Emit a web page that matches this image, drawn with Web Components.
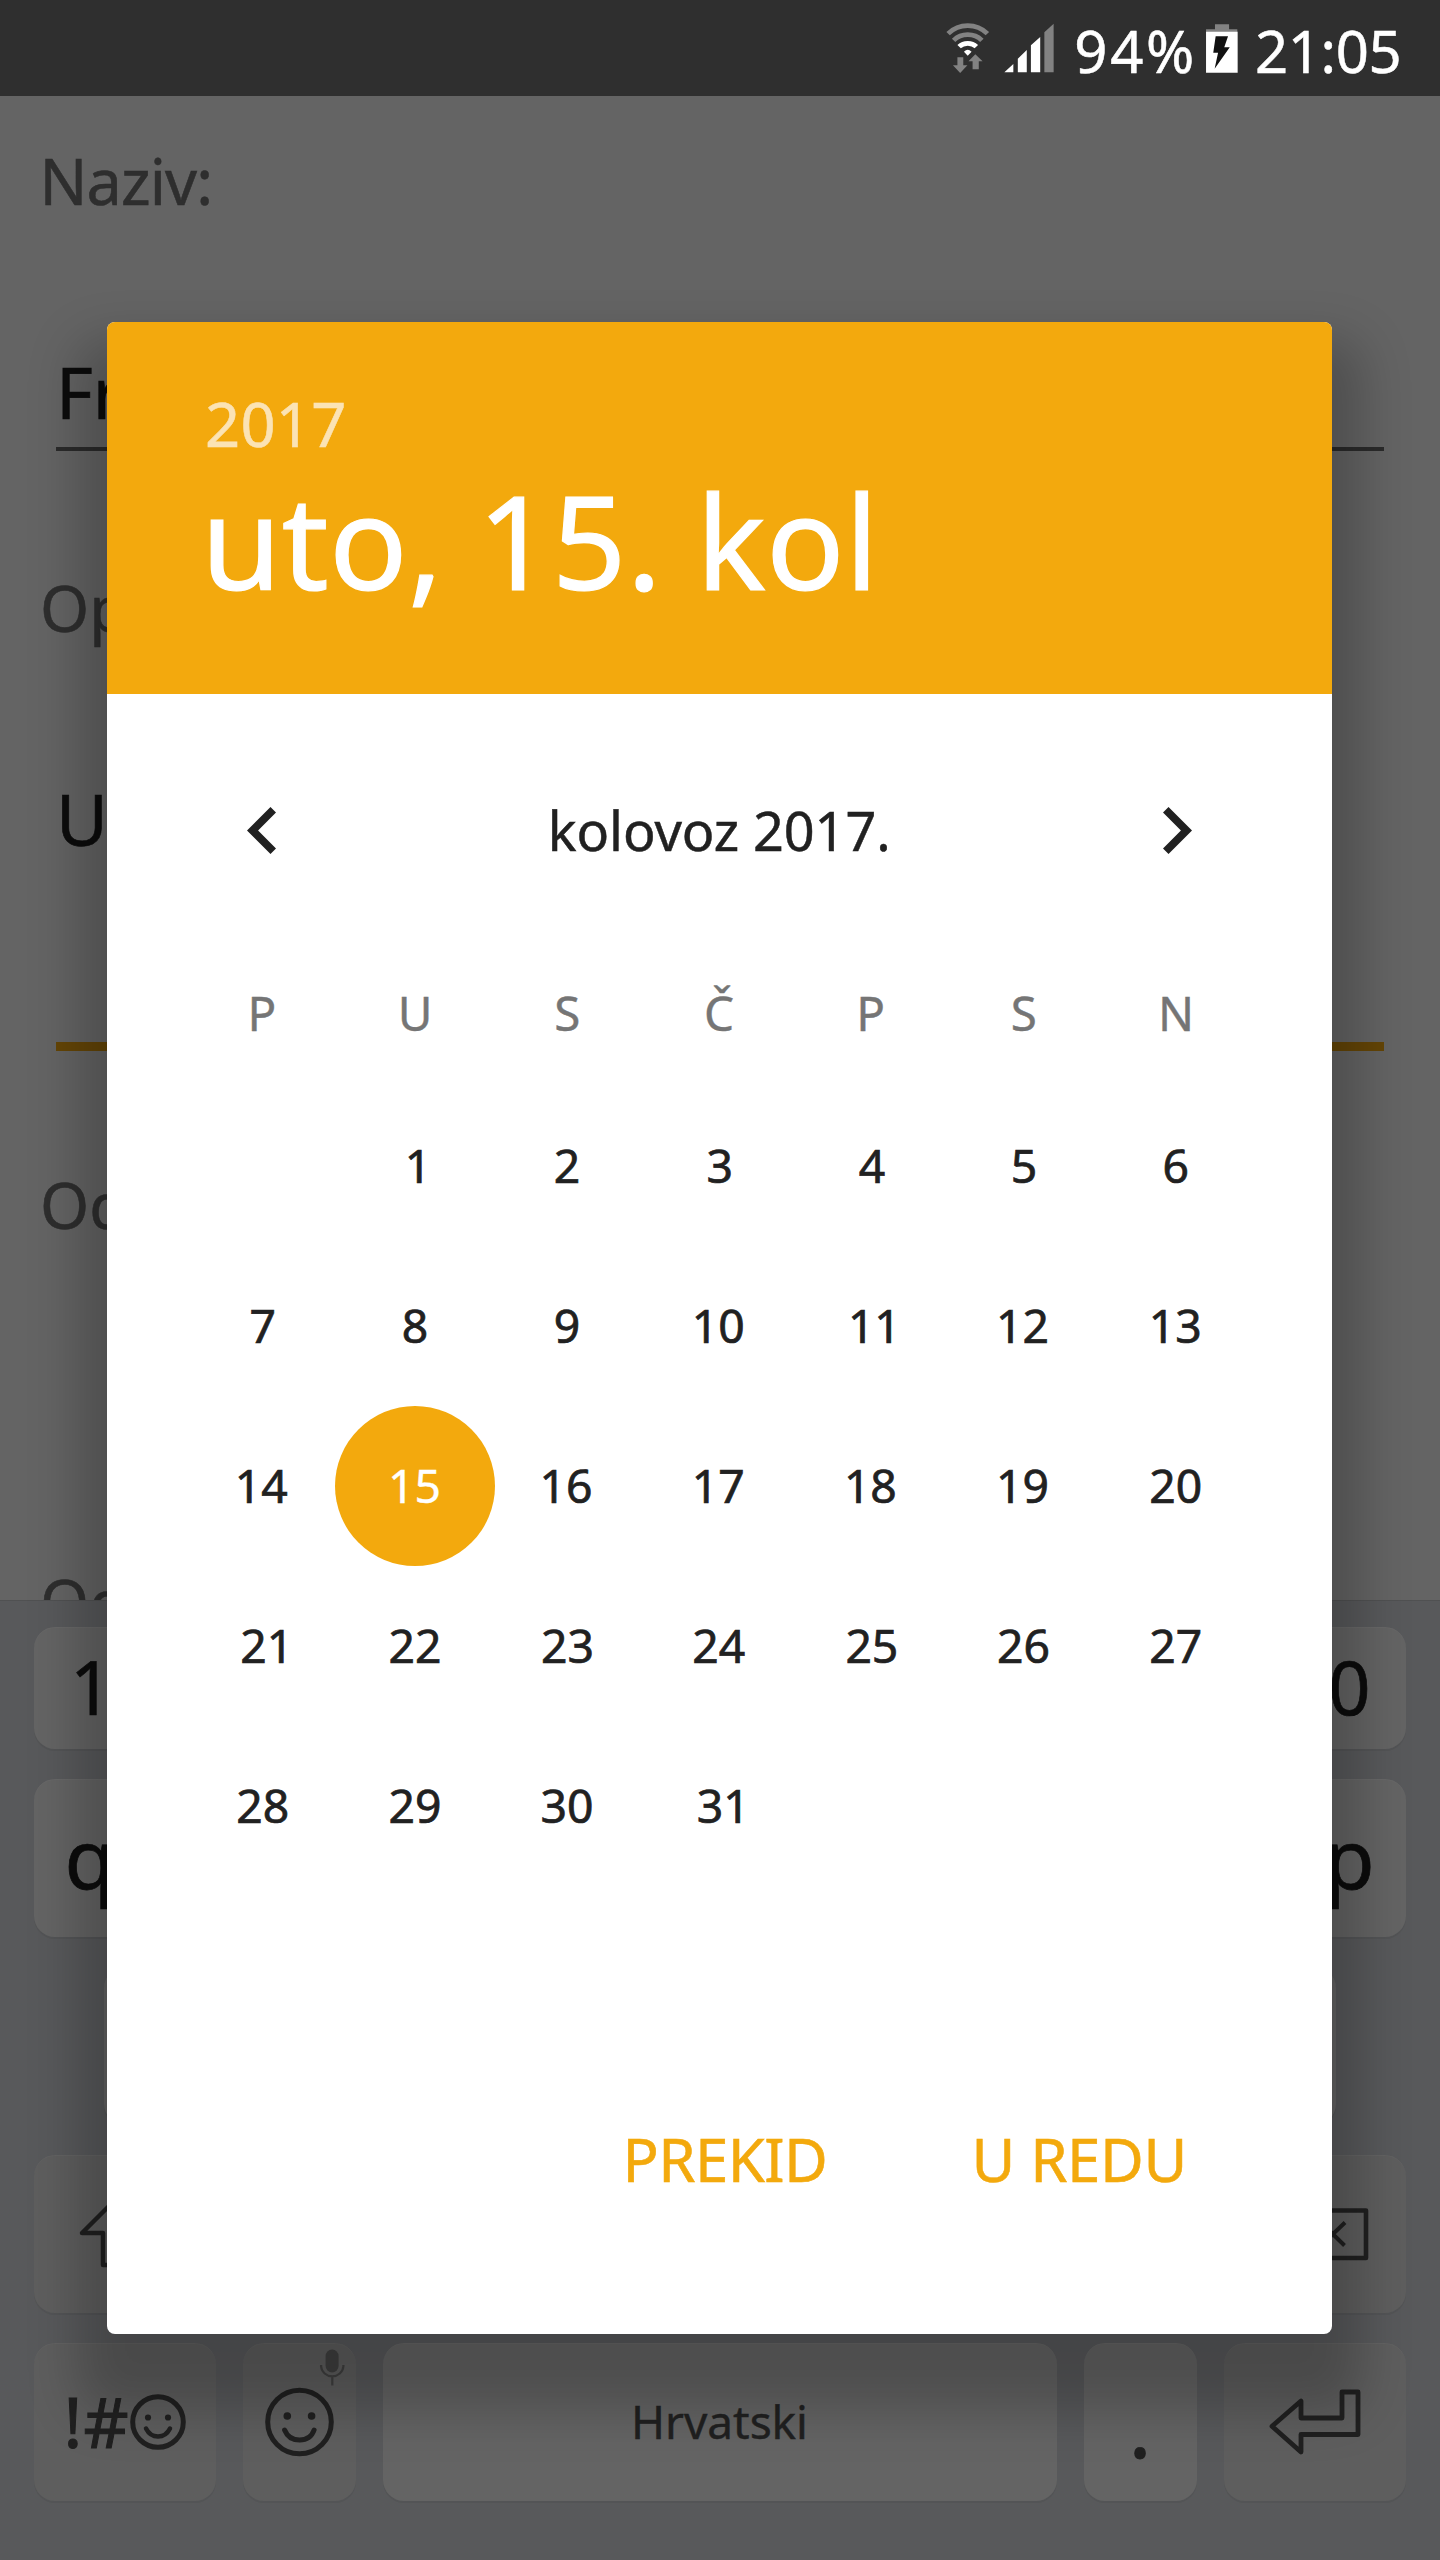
<!DOCTYPE html>
<html lang="hr">
<head>
<meta charset="utf-8">
<title>Odabir datuma</title>
<style>
html,body{margin:0;padding:0}
body{width:1440px;height:2560px;overflow:hidden;background:#646464;font-family:"Noto Sans","Open Sans",sans-serif}
</style>
</head>
<body>
<phone-screen></phone-screen>
<script>
/* Text whose box is its cap height; w sets the ink width through letter spacing. */
class InkText extends HTMLElement{
  connectedCallback(){
    const s=+this.getAttribute('size'),w=+this.getAttribute('w')||0,wt=this.getAttribute('weight')||400,t=this.textContent;
    const c=document.createElement('canvas').getContext('2d');
    c.font=`${wt} ${s}px "Noto Sans","Open Sans",sans-serif`;
    const m=c.measureText(t),ink=m.actualBoundingBoxLeft+m.actualBoundingBoxRight;
    const ls=w&&t.length>1?(w-ink)/(t.length-1):0,out=w||ink;
    const r=this.attachShadow({mode:'open'});
    r.innerHTML=`<style>:host{display:block;flex:none;width:${out}px;height:${.714*s}px;white-space:nowrap;font-size:${s}px;font-weight:${wt};line-height:${.714*s}px}
    span{display:block;width:max-content;margin-left:${m.actualBoundingBoxLeft}px;letter-spacing:${ls}px;transform:translateY(-.008em);-webkit-text-stroke:var(--ink-stroke,.009em) currentColor}</style><span><slot></slot></span>`;
  }
}
customElements.define('ink-text',InkText);

const define=(name,html)=>customElements.define(name,class extends HTMLElement{
  constructor(){super();const t=document.createElement('template');t.innerHTML=html;this.attachShadow({mode:'open'}).append(t.content.cloneNode(true));}
});

define('status-bar',`<style>
:host{display:flex;height:96px;background:#2f2f2f;color:#fff;justify-content:flex-end;align-items:flex-start;padding-right:41.5px;box-sizing:border-box}
svg{display:block;margin-top:21.7px;height:51.7px;flex:none}
.n{margin-top:29.5px}
</style>
<svg style="width:45.5px;margin-right:13px" viewBox="130 65 132 155" preserveAspectRatio="none">
<g fill="none" stroke="#828282"><path stroke-width="14" d="M139 100Q163 76 196 76T253 100"/><path stroke-width="14" d="M155 120Q172 103 196 103T237 120"/><path stroke="#fff" stroke-width="14" d="M171 139Q181 129 196 129T221 139"/></g>
<path fill="#fff" d="M185 154q11-11 22 0l-11 12z"/>
<path fill="#828282" d="M166 171h17v24h12l-21 23-21-23h13zM210 207h18v-24h11l-21-21-20 21h12z"/></svg>
<svg style="width:51.7px;margin-right:21.3px" viewBox="300 65 150 155" preserveAspectRatio="none">
<path fill="#fff" d="M304 216l26-25v25zM343 216v-41l26-26v67zM381 216v-81l27-25v106z"/><path fill="#828282" d="M420 216v-120l27-26v146z"/></svg>
<ink-text class="n" size="58" w="115.7">94%</ink-text>
<svg style="width:33.7px;margin:21.7px 18.3px 0 13px" viewBox="886 65 98 155" preserveAspectRatio="none">
<path fill="#828282" d="M915 72h41v15h24v8h-91v-8h26z"/><path fill="#fff" d="M889 94h92v123h-92z"/><path fill="#111" d="M917 108h36l-11 33h16l-44 64 10-48h-14z"/></svg>
<ink-text class="n" size="58" w="141.5">21:05</ink-text>`);

define('form-field',`<style>
:host{display:block;box-sizing:border-box;flex:none}
.label{color:#2e2e2e;padding-left:var(--label-x,43px)}
.value{color:#0c0c0c;padding-left:62px}
.line{margin:0 56px;height:var(--line-h,4px);background:var(--line,#2b2b2b)}
</style><div class="label"><slot name="label"></slot></div><div class="value"><slot name="value"></slot></div><div class="line"></div>`);

define('app-form',`<style>
:host{display:flex;flex-direction:column;height:1504px;overflow:hidden;background:#646464;box-sizing:border-box;padding-top:62.7px}
[slot=value]{margin-top:164.7px}
.a{--label-x:45.5px;height:427px}.b{--line:#644506;--line-h:9px;height:597.7px}.c{height:397px}.d{height:60px}
.c,.d{--line:transparent}
.a [slot=value]{margin-bottom:28px}.b [slot=value]{margin-top:164px;margin-bottom:197px}
</style>
<form-field class="a"><ink-text slot="label" size="63" w="163.7">Naziv:</ink-text><ink-text slot="value" size="71">Fr</ink-text></form-field>
<form-field class="b"><ink-text slot="label" size="63">Op</ink-text><ink-text slot="value" size="71">U</ink-text></form-field>
<form-field class="c"><ink-text slot="label" size="63">Od</ink-text></form-field>
<form-field class="d"><ink-text slot="label" size="63">Od</ink-text></form-field>`);

define('key-cap',`<style>
:host{display:flex;flex:1 1 0;min-width:0;box-sizing:border-box;border-radius:21px;background:#646464;color:#0c0c0c;box-shadow:0 2px 0 #535456,inset 0 1px 0 rgba(255,255,255,.03);align-items:flex-start}
:host([fn]){background:#5e5e5e;color:#202020}
</style><slot></slot>`);

define('soft-keyboard',`<style>
:host{display:flex;flex-direction:column;height:960px;box-sizing:border-box;background:#58595b;padding:25.5px 34px 0;gap:30px;border-top:1px solid #505152}
.row{display:flex;gap:27px;height:158px;flex:none}
.num{height:122.5px}
.mid{padding:0 70px}
svg{display:block;overflow:visible}
</style>
<div class="row num"><key-cap><ink-text size="74" style="margin:35px 0 0 42px">1</ink-text></key-cap>
<key-cap></key-cap><key-cap></key-cap><key-cap></key-cap><key-cap></key-cap><key-cap></key-cap><key-cap></key-cap><key-cap></key-cap><key-cap></key-cap>
<key-cap><ink-text size="74" style="margin:35px 0 0 38px">0</ink-text></key-cap></div>
<div class="row"><key-cap><ink-text size="82" style="margin:50px 0 0 34.5px">q</ink-text></key-cap>
<key-cap></key-cap><key-cap></key-cap><key-cap></key-cap><key-cap></key-cap><key-cap></key-cap><key-cap></key-cap><key-cap></key-cap><key-cap></key-cap>
<key-cap><ink-text size="82" style="margin:50px 0 0 37px">p</ink-text></key-cap></div>
<div class="row mid"><key-cap></key-cap><key-cap></key-cap><key-cap></key-cap><key-cap></key-cap><key-cap></key-cap><key-cap></key-cap><key-cap></key-cap><key-cap></key-cap><key-cap></key-cap></div>
<div class="row">
<key-cap fn style="flex:0 0 182px"><svg width="182" height="158" viewBox="34 2155.5 182 158" fill="none" stroke="#202020" stroke-width="4.5" stroke-linejoin="round"><path d="M82 2233.5l35-35 35 35h-20v32h-29v-32z"/></svg></key-cap>
<key-cap></key-cap><key-cap></key-cap><key-cap></key-cap><key-cap></key-cap><key-cap></key-cap><key-cap></key-cap><key-cap></key-cap>
<key-cap fn style="flex:0 0 182px"><svg width="182" height="158" viewBox="1224 2155.5 182 158" fill="none" stroke="#202020" stroke-width="4.6" stroke-linejoin="round"><path d="M1290 2211h76v47.5h-76l-24-23.7z"/><path stroke-width="4" d="M1321 2223l23.5 23M1345 2223l-24 23"/></svg></key-cap></div>
<div class="row">
<key-cap fn style="flex:0 0 182px"><ink-text size="70" style="margin:53.5px 0 0 34.5px;--ink-stroke:1px">!</ink-text><ink-text size="70" w="39" style="margin:53.5px 0 0 7px;--ink-stroke:1px">#</ink-text>
<svg width="60" height="60" viewBox="0 0 60 60" style="margin-top:49px;margin-left:calc(126px - 121.5px)" fill="none" stroke="#202020" stroke-width="5"><circle cx="30" cy="30" r="25.3"/><g fill="#202020" stroke="none"><circle cx="20" cy="25.5" r="3.1"/><circle cx="40" cy="25.5" r="3.1"/></g><path stroke-linecap="round" stroke-width="4.5" d="M18 36.5Q22 44.5 30 44.5T42 36.5"/></svg></key-cap>
<key-cap fn style="flex:0 0 112.6px"><svg width="112.6" height="158" viewBox="243.4 2343.5 112.6 158" fill="none" stroke="#202020" stroke-width="5"><circle cx="299.9" cy="2422.5" r="31.8"/><g fill="#202020" stroke="none"><circle cx="287.7" cy="2416.5" r="3.8"/><circle cx="312" cy="2416.5" r="3.8"/></g><path stroke-linecap="round" stroke-width="5" d="M285 2430.5Q289 2440.5 300 2440.5T314.5 2430.5"/>
<g stroke="#404040" stroke-width="2.2"><rect x="326" y="2350" width="13" height="23" rx="6.5" fill="#404040" stroke="none"/><path d="M321.5 2365.5v1.5a11.200 10.800 0 0 0 22.3 0v-1.500M332.700 2378v8"/></g></svg></key-cap>
<key-cap style="color:#202020"><ink-text size="46" w="170" style="margin:62px 0 0 252.5px">Hrvatski</ink-text></key-cap>
<key-cap style="flex:0 0 113px;color:#202020"><ink-text size="86" style="margin:51.5px 0 0 50.5px">.</ink-text></key-cap>
<key-cap fn style="flex:0 0 182px"><svg width="182" height="158" viewBox="1224 2343.5 182 158" fill="none" stroke="#202020" stroke-width="4.8" stroke-linejoin="round"><path d="M1272 2426.8L1301 2401.5V2418.5H1342V2392.5H1358V2435H1301V2452.5z"/></svg></key-cap></div>`);

define('month-nav',`<style>
:host{display:flex;height:272px;align-items:center;justify-content:space-between;padding:0 140px;color:#212121}
svg{display:block;width:29px;height:47px;fill:#212121}
</style>
<svg viewBox="8 6 7.41 12"><path d="M15.41 7.41L14 6l-6 6 6 6 1.41-1.41L10.83 12z"/></svg>
<slot></slot>
<svg viewBox="8.59 6 7.41 12"><path d="M10 6L8.59 7.41 13.17 12l-4.58 4.59L10 18l6-6z"/></svg>`);

customElements.define('month-grid',class extends HTMLElement{
  connectedCallback(){
    const sel=+this.getAttribute('selected'),off=+this.getAttribute('offset'),n=+this.getAttribute('days');
    let h='';
    for(const d of this.getAttribute('weekdays').split(' '))h+=`<div class="wd"><ink-text size="47.5">${d}</ink-text></div>`;
    for(let i=0;i<off;i++)h+='<div></div>';
    for(let d=1;d<=n;d++)h+=`<div class="d"><div class="${d===sel?'sel':''}"><ink-text size="46.3">${d}</ink-text></div></div>`;
    this.attachShadow({mode:'open'}).innerHTML=`<style>
    :host{display:grid;grid-template-columns:repeat(7,minmax(0,1fr));grid-template-rows:120px repeat(5,160px);padding:0 80px}
    .wd,.d,.d>div{display:flex;align-items:center;justify-content:center}
    .wd{height:94px;color:#757575}
    .d{color:#212121;--ink-stroke:.7px}
    .d>.sel{flex:none;width:160px;height:160px;border-radius:50%;background:#f3a90d;color:#fff;--ink-stroke:.4px}
    </style>${h}`;
  }
});

define('date-dialog',`<style>
:host{display:flex;flex-direction:column;width:1225px;height:2012px;border-radius:8px;overflow:hidden;background:#fff;box-shadow:0 48px 50px 30px rgba(0,0,0,.22)}
header{display:flex;flex-direction:column;height:372px;box-sizing:border-box;padding:80px 0 0 100px;background:#f3a90d;color:#fff;flex:none}
.year{color:#fbe3b4}
.date{margin:49.5px 0 0 4px}
footer{display:flex;justify-content:flex-end;align-items:center;padding:252px 149.5px 0 0;gap:151.5px;color:#f3a90d}
</style>
<header><ink-text class="year" size="61.5" w="137.3">2017</ink-text><ink-text class="date" size="130" w="657">uto, 15. kol</ink-text></header>
<month-nav><ink-text size="54" w="335.4">kolovoz 2017.</ink-text></month-nav>
<month-grid weekdays="P U S Č P S N" offset="1" days="31" selected="15"></month-grid>
<footer><ink-text size="60" w="197.5">PREKID</ink-text><ink-text size="60" w="206">U REDU</ink-text></footer>`);

define('phone-screen',`<style>
:host{display:block;position:relative;width:1440px;height:2560px;overflow:hidden}
date-dialog{position:absolute;left:107px;top:322px}
</style><status-bar></status-bar><app-form></app-form><soft-keyboard></soft-keyboard><date-dialog></date-dialog>`);
</script>
</body>
</html>
